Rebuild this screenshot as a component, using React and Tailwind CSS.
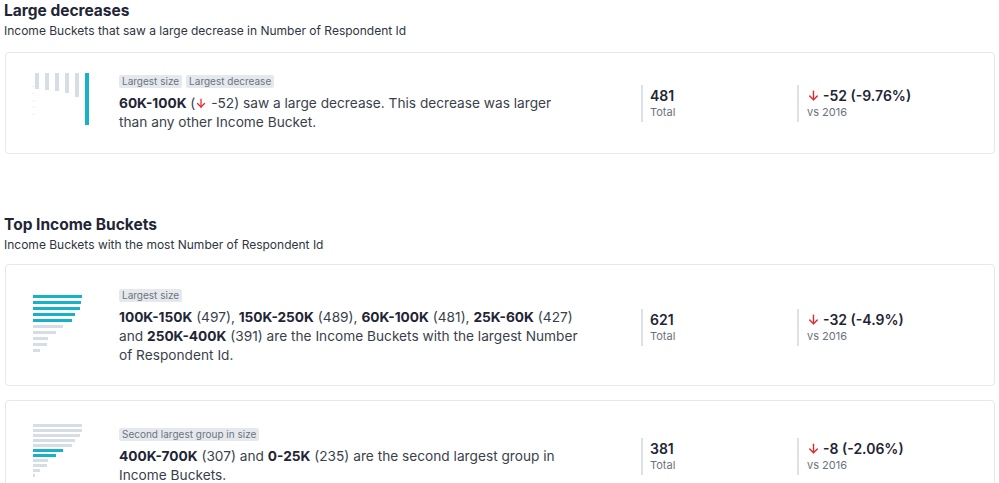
import React from "react";

const TEAL = "bg-[#17b2c7]";
const GRAY = "bg-[#d6dde5]";

function ArrowDown({ className }) {
  return (
    <svg viewBox="0 0 24 24" className={className} fill="none" stroke="currentColor" strokeWidth="2.5" strokeLinecap="round" strokeLinejoin="round">
      <path d="M12 4v16" />
      <path d="M5 13l7 7 7-7" />
    </svg>
  );
}

function VBarChart() {
  const grays = [16, 17, 18, 20, 24];
  return (
    <div className="relative flex items-start gap-[6px] pl-[2px] h-[52px]">
      <div className="absolute left-0 top-[13px] flex flex-col gap-[6px]">
        {[0, 1, 2, 3, 4].map((i) => (
          <div key={i} className="w-px h-px bg-[#bfeaf1]" />
        ))}
      </div>
      {grays.map((h, i) => (
        <div key={i} className={`w-[4px] ${GRAY}`} style={{ height: h }} />
      ))}
      <div className={`w-[4px] h-[52px] ${TEAL}`} />
    </div>
  );
}

function HBarChart({ bars, gap }) {
  return (
    <div className={`flex flex-col ${gap}`}>
      {bars.map(([w, teal], i) => (
        <div key={i} className={`h-[3px] ${teal ? TEAL : GRAY}`} style={{ width: w }} />
      ))}
    </div>
  );
}

function Tag({ children }) {
  return (
    <span className="inline-block bg-[#e5e9ee] text-[#6b7480] text-[10px] leading-[13px] px-[3px] rounded-[2px]">
      {children}
    </span>
  );
}

function B({ children }) {
  return <span className="font-bold text-[#1f2535]">{children}</span>;
}

function Metrics({ total, change }) {
  return (
    <div className="flex">
      <div className="w-[156px] border-l-2 border-[#dde2e8] pl-[7px] py-[2px]">
        <div className="text-[14px] leading-[18px] font-semibold text-[#1f2535]">{total}</div>
        <div className="text-[11px] leading-[15px] text-[#6b7280]">Total</div>
      </div>
      <div className="border-l-2 border-[#dde2e8] pl-[8px] py-[2px]">
        <div className="flex items-center gap-[3px] text-[14px] leading-[18px] font-semibold text-[#1f2535]">
          <ArrowDown className="w-[13px] h-[13px] text-[#e8262a]" />
          <span>{change}</span>
        </div>
        <div className="text-[11px] leading-[15px] text-[#6b7280]">vs 2016</div>
      </div>
    </div>
  );
}

function Card({ chart, chartCls, tags, text, total, change, h }) {
  return (
    <div className={`ml-[5px] mr-[4px] border border-[#e6e8eb] rounded-[4px] flex items-center pl-[27px] ${h}`}>
      <div className={`w-[86px] shrink-0 flex items-center ${chartCls}`}>{chart}</div>
      <div className="w-[522px] shrink-0">
        <div className="flex gap-[4px] mb-[6px]">
          {tags.map((t) => (
            <Tag key={t}>{t}</Tag>
          ))}
        </div>
        <div className="w-[460px] text-[13.7px] leading-[19px] text-[#3a3f4c]">{text}</div>
      </div>
      <Metrics total={total} change={change} />
    </div>
  );
}

export default function App() {
  const chart2 = [
    [49, true],
    [48, true],
    [47, true],
    [42, true],
    [39, true],
    [30, false],
    [23, false],
    [15, false],
    [14, false],
    [7, false],
  ];
  const chart3 = [
    [49, false],
    [49, false],
    [47, false],
    [42, false],
    [39, false],
    [30, true],
    [23, true],
    [15, false],
    [14, false],
    [7, false],
    [2, false],
  ];
  return (
    <div className="w-[999px] h-[483px] overflow-hidden bg-white font-['Inter','Noto_Sans',sans-serif]">
      <div className="pl-[4px] pt-[0px]">
        <h2 className="text-[15.5px] leading-[21px] font-bold text-[#1f2535]">Large decreases</h2>
        <p className="text-[12px] leading-[18px] text-[#2f3542] mt-[1px]">
          Income Buckets that saw a large decrease in Number of Respondent Id
        </p>
      </div>
      <div className="mt-[12px]">
        <Card
          h="h-[102px]"
          chartCls="mb-[8px]"
          chart={<VBarChart />}
          tags={["Largest size", "Largest decrease"]}
          text={
            <>
              <B>60K-100K</B> (
              <ArrowDown className="inline w-[12px] h-[12px] text-[#e8262a] align-[-1px]" /> -52) saw a large decrease. This decrease was larger than any other Income Bucket.
            </>
          }
          total="481"
          change="-52 (-9.76%)"
        />
      </div>
      <div className="pl-[4px] mt-[60px]">
        <h2 className="text-[15.5px] leading-[21px] font-bold text-[#1f2535]">Top Income Buckets</h2>
        <p className="text-[12px] leading-[18px] text-[#2f3542] mt-[1px]">
          Income Buckets with the most Number of Respondent Id
        </p>
      </div>
      <div className="mt-[10px] flex flex-col gap-[14px]">
        <Card
          h="h-[122px] pt-[4px]"
          chartCls="mb-[7px]"
          chart={<HBarChart bars={chart2} gap="gap-[3px]" />}
          tags={["Largest size"]}
          text={
            <>
              <B>100K-150K</B> (497), <B>150K-250K</B> (489), <B>60K-100K</B> (481), <B>25K-60K</B> (427) and{" "}
              <B>250K-400K</B> (391) are the Income Buckets with the largest Number of Respondent Id.
            </>
          }
          total="621"
          change="-32 (-4.9%)"
        />
        <Card
          h="h-[112px]"
          chartCls="mb-[12px]"
          chart={<HBarChart bars={chart3} gap="gap-[2px]" />}
          tags={["Second largest group in size"]}
          text={
            <>
              <B>400K-700K</B> (307) and <B>0-25K</B> (235) are the second largest group in Income Buckets.
            </>
          }
          total="381"
          change="-8 (-2.06%)"
        />
      </div>
    </div>
  );
}
